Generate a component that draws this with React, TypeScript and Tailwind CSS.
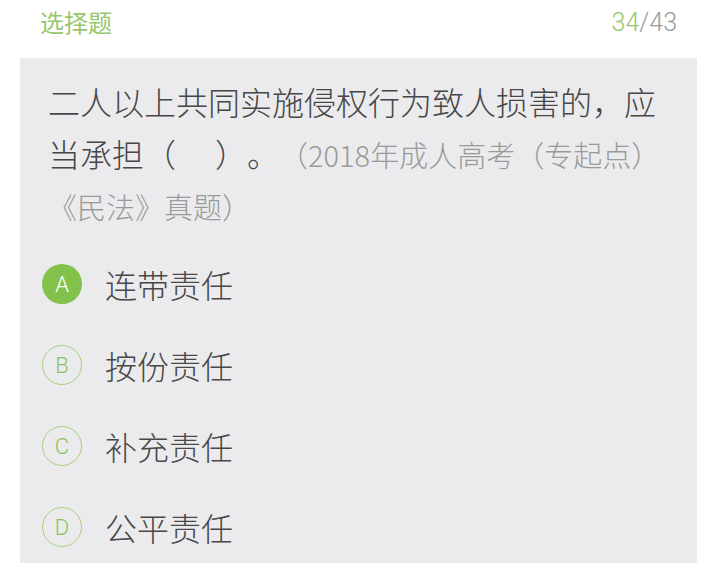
const options = [
  { key: "A", text: "连带责任", selected: true },
  { key: "B", text: "按份责任", selected: false },
  { key: "C", text: "补充责任", selected: false },
  { key: "D", text: "公平责任", selected: false },
];

const cjk = { fontFamily: '"Noto Sans CJK SC", "Noto Sans", sans-serif' };

export default function App() {
  return (
    <div className="w-[709px] h-[574px] bg-white [text-spacing-trim:space-all]" style={cjk}>
      {/* Header */}
      <div className="h-[58px] flex items-start justify-between pt-[10px] pl-[40px] pr-[32px]">
        <span className="text-[24px] leading-none text-[#97c66c]">选择题</span>
        <span
          className="text-[25px] leading-none font-light"
          style={{ fontFamily: 'Roboto, "Noto Sans", sans-serif' }}
        >
          <span className="text-[#97c66c]">34</span>
          <span className="text-[#9a9a9a]">/43</span>
        </span>
      </div>

      {/* Question card */}
      <div className="mx-[20px] w-[677px] h-[505px] bg-[#ebebed] pt-[17px] pb-[15px]">
        <p className="pl-[28px] pr-[20px] text-[32px] leading-[52px] font-light text-[#474747]">
          二人以上共同实施侵权行为致人损害的，应当承担（　 ）。
          <span className="text-[29px] leading-none text-[#9a9a9a]">（2018年成人高考（专起点）《民法》真题）</span>
        </p>

        <div className="mt-[33px] pl-[22px] flex flex-col gap-[41px]">
          {options.map((o) => (
            <div key={o.key} className="h-[40px] flex items-center gap-[23px]">
              <div
                className={
                  o.selected
                    ? "w-[40px] h-[40px] rounded-full bg-[#82c24b] text-white flex items-center justify-center text-[22px] font-light"
                    : "w-[40px] h-[40px] rounded-full border-[1.5px] border-[#a5d07e] text-[#8cc35e] flex items-center justify-center text-[22px] font-light"
                }
                style={{ fontFamily: 'Roboto, "Liberation Sans", sans-serif' }}
              >
                {o.key}
              </div>
              <span className="text-[32px] font-light text-[#484848]">{o.text}</span>
            </div>
          ))}
        </div>
      </div>
    </div>
  );
}
